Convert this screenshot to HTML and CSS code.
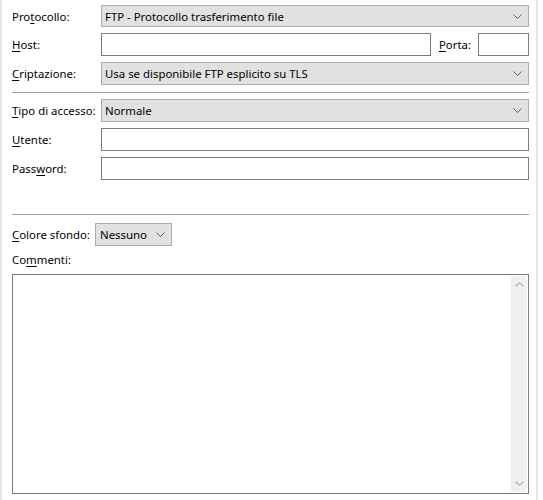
FILE: index.html
```html
<!DOCTYPE html>
<html lang="it">
<head>
<meta charset="utf-8">
<link rel="stylesheet" href="styles.css">
</head>
<body>
<div class="frame">
  <div class="panel">
    <div class="row first">
      <label class="lbl"><span>Pro</span><u>t</u>ocollo:</label>
      <div class="select grow"><span>FTP - Protocollo trasferimento file</span><svg class="chev" viewBox="0 0 9 5"><path d="M0.5 0.5 L4.5 4.5 L8.5 0.5" fill="none" stroke="#606060" stroke-width="1"/></svg></div>
    </div>
    <div class="row">
      <label class="lbl"><u>H</u>ost:</label>
      <div class="input grow"></div>
      <label class="lbl2"><u>P</u>orta:</label>
      <div class="input port"></div>
    </div>
    <div class="row">
      <label class="lbl"><u>C</u>riptazione:</label>
      <div class="select grow"><span>Usa se disponibile FTP esplicito su TLS</span><svg class="chev" viewBox="0 0 9 5"><path d="M0.5 0.5 L4.5 4.5 L8.5 0.5" fill="none" stroke="#606060" stroke-width="1"/></svg></div>
    </div>
    <div class="sep sep1"></div>
    <div class="row">
      <label class="lbl"><u>T</u>ipo di accesso:</label>
      <div class="select grow"><span>Normale</span><svg class="chev" viewBox="0 0 9 5"><path d="M0.5 0.5 L4.5 4.5 L8.5 0.5" fill="none" stroke="#606060" stroke-width="1"/></svg></div>
    </div>
    <div class="row">
      <label class="lbl"><u>U</u>tente:</label>
      <div class="input grow"></div>
    </div>
    <div class="row">
      <label class="lbl">Pass<u>w</u>ord:</label>
      <div class="input grow"></div>
    </div>
    <div class="sep sep2"></div>
    <div class="row colrow">
      <label class="lbl3"><u>C</u>olore sfondo:</label>
      <div class="select small"><span>Nessuno</span><svg class="chev" viewBox="0 0 9 5"><path d="M0.5 0.5 L4.5 4.5 L8.5 0.5" fill="none" stroke="#606060" stroke-width="1"/></svg></div>
    </div>
    <div class="comm">Co<u>m</u>menti:</div>
    <div class="textarea">
      <div class="scroll">
        <svg class="sarrow" viewBox="0 0 9 5"><path d="M0.5 4.5 L4.5 0.8 L8.5 4.5" fill="none" stroke="#c2c2c2" stroke-width="1.6"/></svg>
        <svg class="sarrow" viewBox="0 0 9 5"><path d="M0.5 0.5 L4.5 4.2 L8.5 0.5" fill="none" stroke="#c2c2c2" stroke-width="1.6"/></svg>
      </div>
    </div>
  </div>
</div>
</body>
</html>
```
FILE: styles.css
```css
html, body {
  margin: 0;
  padding: 0;
  background: #ffffff;
}
body {
  font-family: "Noto Sans", "Open Sans", sans-serif;
  font-size: 11.4px;
  color: #000;
  width: 543px;
  height: 500px;
  overflow: hidden;
}
u {
  text-decoration: underline;
  text-underline-offset: 2px;
}
.frame {
  box-sizing: border-box;
  width: 538px;
  height: 500px;
  border-left: 2px solid #e6e6e6;
  border-right: 2px solid #e6e6e6;
}
.panel {
  padding: 5px 7px 0 10px;
  display: flex;
  flex-direction: column;
}
.row {
  display: flex;
  align-items: center;
  height: 23px;
  margin-bottom: 6px;
}
.row.first {
  height: 22px;
}
.row.first .select {
  height: 22px;
}
.lbl {
  width: 89px;
  flex: none;
  white-space: nowrap;
}
.lbl2 {
  margin: 0 7px 0 8px;
  white-space: nowrap;
}
.lbl3 {
  width: 83px;
  flex: none;
  white-space: nowrap;
}
.grow {
  flex: 1;
}
.select {
  box-sizing: border-box;
  height: 23px;
  background: #e1e1e1;
  border: 1px solid #adadad;
  display: flex;
  align-items: center;
  justify-content: space-between;
  padding: 0 6px 0 3px;
}
.select span {
  white-space: nowrap;
}
.chev {
  width: 9px;
  height: 5px;
  flex: none;
}
.small {
  width: 77px;
  flex: none;
  padding-left: 4px;
}
.input {
  box-sizing: border-box;
  height: 23px;
  background: #fff;
  border: 1px solid #7a7a7a;
}
.port {
  width: 51px;
  flex: none;
}
.sep {
  height: 1px;
  background: #a0a0a0;
  border-bottom: 1px solid #ffffff;
}
.sep1 {
  margin: 1px 0 5px 0;
}
.sep2 {
  margin: 28px 0 7px 0;
}
.colrow {
  margin-bottom: 6px;
}
.comm {
  height: 22px;
  line-height: 15px;
}
.textarea {
  box-sizing: border-box;
  height: 220px;
  border: 1px solid #7a7a7a;
  background: #fff;
  display: flex;
  justify-content: flex-end;
  padding: 1px;
}
.scroll {
  width: 16px;
  background: #f0f0f0;
  display: flex;
  flex-direction: column;
  justify-content: space-between;
  align-items: center;
  padding: 6px 0;
  box-sizing: border-box;
}
.sarrow {
  width: 9px;
  height: 5px;
}
```
